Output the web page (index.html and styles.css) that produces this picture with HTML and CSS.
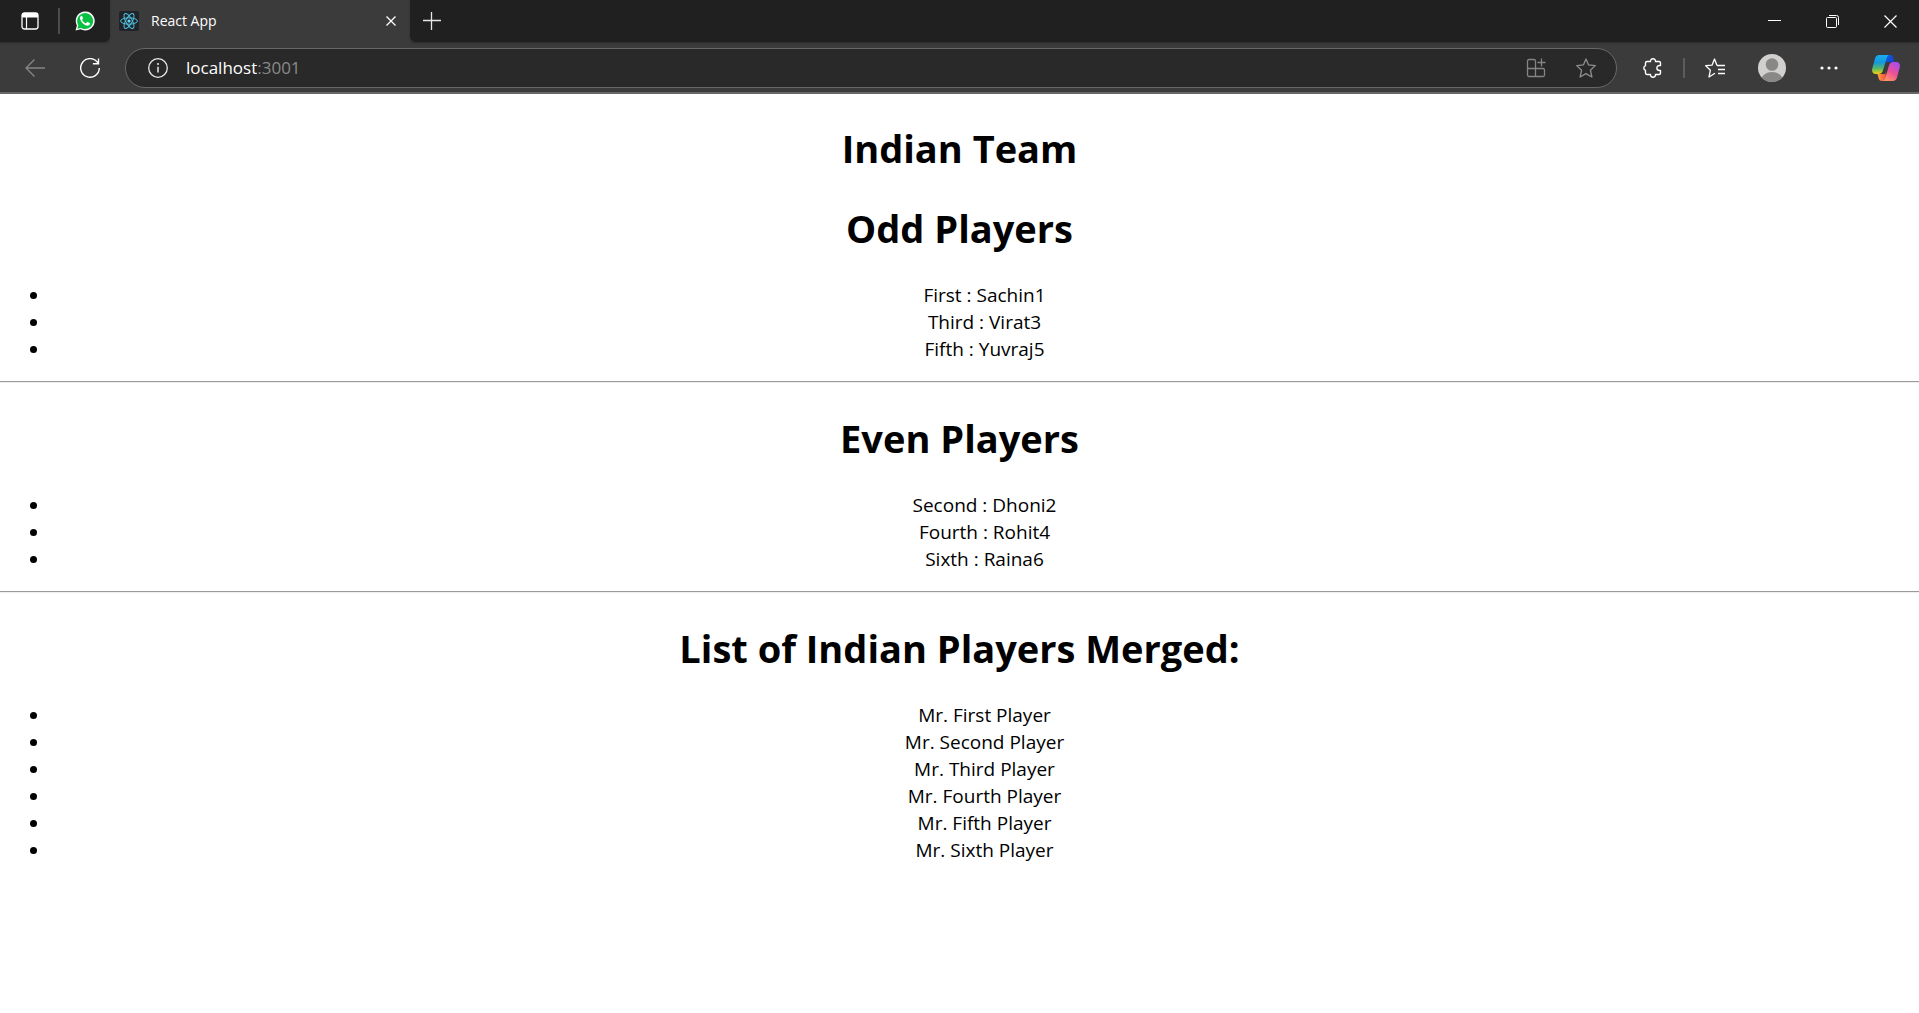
FILE: index.html
```html
<!DOCTYPE html>
<html lang="en">
<head>
<meta charset="utf-8">
<meta name="viewport" content="width=device-width, initial-scale=1">
<title>React App</title>
<link rel="stylesheet" href="styles.css">
</head>
<body>
<header class="browser">
  <div class="tabstrip">
    <div class="pinned">
      <button class="pin-btn" type="button" aria-label="Tab actions">
        <svg width="18" height="18" viewBox="0 0 18 18" fill="none" stroke="#fff"><rect x="1" y="1" width="16" height="16" rx="2.500" stroke-width="1.300"/><path d="M1.500 1.500h15v3.500h-15z" fill="#fff"/><path d="M5.500 5v12" stroke-width="1.200"/></svg>
      </button>
      <span class="pin-sep"></span>
      <button class="pin-btn" type="button" aria-label="WhatsApp">
        <svg width="20" height="20" viewBox="0 0 20 20"><path d="M.5 19.500l1.400-5A9.500 9.500 0 1 1 5.600 18.200z" fill="#fff"/><path d="M2.300 17.700l1-3.500A8 8 0 1 1 6 16.900z" fill="#0bc143"/><path d="M7.300 5.400c-.3-.6-.7-.6-1-.5C5.500 5 4.800 6.200 5 7.400c.4 2.700 3.600 6.200 6.600 7.100 1.700.5 3.100-.4 3.300-1.600.1-.6.1-.8-.2-1l-2-.9c-.4-.2-.6 0-.8.300l-.7.9c-.2.200-.4.200-.7.100-1.600-.7-2.700-1.800-3.400-3.200-.1-.3 0-.4.200-.6.500-.6.900-.9.700-1.400z" fill="#fff"/></svg>
      </button>
    </div>
    <div class="tab">
      <svg class="favicon" width="20" height="20" viewBox="0 0 20 20" fill="none" stroke="#4fc3de"><rect width="20" height="20" rx="2" fill="#20232a" stroke="none"/><ellipse cx="10" cy="10" rx="8.400" ry="3.200"/><ellipse cx="10" cy="10" rx="8.400" ry="3.200" transform="rotate(60 10 10)"/><ellipse cx="10" cy="10" rx="8.400" ry="3.200" transform="rotate(120 10 10)"/><circle cx="10" cy="10" r="1.600" fill="#61dafb" stroke="none"/></svg>
      <span class="tab-title">React App</span>
      <button class="tab-close" type="button" aria-label="Close tab">
        <svg width="10" height="10" viewBox="0 0 10 10" stroke="#fff" stroke-width="1.300"><path d="M.5.5l9 9M9.500.5l-9 9"/></svg>
      </button>
    </div>
    <div class="strip-rest">
      <button class="new-tab" type="button" aria-label="New tab">
        <svg width="18" height="18" viewBox="0 0 18 18" stroke="#e6e6e6" stroke-width="1.300"><path d="M0 8.500h18M8.500 0v18"/></svg>
      </button>
      <div class="window-controls">
        <button type="button" aria-label="Minimize"><svg width="13" height="13" viewBox="0 0 13 13" stroke="#fff"><path d="M0 5.500h13"/></svg></button>
        <button type="button" aria-label="Restore"><svg width="13" height="13" viewBox="0 0 13 13" fill="none" stroke="#fff"><rect x=".5" y="2.500" width="10" height="10" rx="1"/><path d="M3 .5h7.500a2 2 0 0 1 2 2V10"/></svg></button>
        <button type="button" aria-label="Close window"><svg width="13" height="13" viewBox="0 0 13 13" stroke="#fff" stroke-width="1.200"><path d="M.5.5l12 12M12.500.5l-12 12"/></svg></button>
      </div>
    </div>
  </div>
  <div class="toolbar">
    <button class="tool" type="button" aria-label="Back"><svg width="20" height="18" viewBox="0 0 20 18" fill="none" stroke="#858585" stroke-width="1.300"><path d="M20 9H1M9.500.5L1 9l8.500 8.500"/></svg></button>
    <button class="tool tool-reload" type="button" aria-label="Refresh"><svg width="20" height="20" viewBox="0 0 20 20" fill="none" stroke="#fff" stroke-width="1.400"><path d="M18 5.200A9.300 9.300 0 1 0 19.300 10M18.500.5v5.200h-5.600"/></svg></button>
    <form class="address">
      <button class="info" type="button" aria-label="View site information"><svg width="20" height="20" viewBox="0 0 20 20" fill="none" stroke="#e8e8e8" stroke-width="1.300"><circle cx="10" cy="10" r="9.300"/><path d="M10 8.800v5.700" stroke-width="1.500"/><circle cx="10" cy="6" r="1" fill="#e8e8e8" stroke="none"/></svg></button>
      <label class="url"><input class="url-host" type="text" value="localhost" aria-label="Address" size="9"><span class="url-port">:3001</span></label>
      <button class="tool" type="button" aria-label="App available"><svg width="20" height="20" viewBox="0 0 20 20" fill="none" stroke="#858585" stroke-width="1.300"><path d="M9.500 18.500V3a1.500 1.500 0 0 0-1.500-1.500H3A1.500 1.500 0 0 0 1.500 3v14A1.500 1.500 0 0 0 3 18.500h14a1.500 1.500 0 0 0 1.500-1.500v-5a1.500 1.500 0 0 0-1.500-1.500H1.500M15.500.5v8M11.500 4.500h8"/></svg></button>
      <button class="tool" type="button" aria-label="Add to favorites"><svg width="20" height="20" viewBox="0 0 20 20" fill="none" stroke="#8e8e8e" stroke-width="1.300" stroke-linejoin="round"><path d="M10 1l2.600 5.900 6.700.7-4.900 4.600 1.500 6.800L10 15.600 4.100 19l1.500-6.800L.7 7.600l6.700-.7z"/></svg></button>
    </form>
    <button class="tool" type="button" aria-label="Extensions"><svg width="20" height="20" viewBox="0 0 20 20" fill="none" stroke="#fff" stroke-width="1.400" stroke-linejoin="round"><path d="M4 3.500h3.500C7.300 1.700 8.500.8 10 .8s2.700.9 2.500 2.700H16c.8 0 1.500.7 1.500 1.500v2.500h-1c-1.700 0-2.600 1.100-2.600 2.500s.9 2.500 2.600 2.500h1V15c0 .8-.7 1.500-1.500 1.500h-3.500c.2 1.800-1 2.700-2.500 2.700s-2.700-.9-2.500-2.700H4c-.8 0-1.500-.7-1.500-1.500v-2.600C1.300 12 .8 11.200.8 10s.5-2 1.700-2.400V5c0-.8.7-1.500 1.500-1.500z"/></svg></button>
    <span class="tool-sep"></span>
    <button class="tool" type="button" aria-label="Favorites"><svg width="20" height="20" viewBox="0 0 20 20" fill="none" stroke="#fff" stroke-width="1.300" stroke-linejoin="round"><path d="M12 7.500L9.500 1 7 7.200l-6.300.5 4.700 4.500L4 19l6-3.700M12 7.500h8M13 11.500h7M13 15.500h7"/></svg></button>
    <button class="tool" type="button" aria-label="Profile"><svg width="28" height="28" viewBox="0 0 28 28"><defs><clipPath id="face"><circle cx="14" cy="14" r="14"/></clipPath></defs><g clip-path="url(#face)"><rect width="28" height="28" fill="#d2d0ce"/><circle cx="14" cy="10.500" r="6.300" fill="#8a8886"/><ellipse cx="14" cy="25.500" rx="10.500" ry="7.500" fill="#8a8886"/></g></svg></button>
    <button class="tool" type="button" aria-label="Settings and more"><svg width="18" height="4" viewBox="0 0 18 4" fill="#fff"><circle cx="2" cy="2" r="1.600"/><circle cx="9" cy="2" r="1.600"/><circle cx="16" cy="2" r="1.600"/></svg></button>
    <button class="tool" type="button" aria-label="Copilot"><svg width="28" height="26" viewBox="0 0 28 26">
      <defs>
        <linearGradient id="cool" x1="0" y1="0" x2="0" y2="1"><stop offset="0" stop-color="#16aef0"/><stop offset=".4" stop-color="#1598dc"/><stop offset=".7" stop-color="#54b86a"/><stop offset="1" stop-color="#f4d20a"/></linearGradient>
        <linearGradient id="warm" x1=".8" y1="0" x2=".2" y2="1"><stop offset="0" stop-color="#a54df0"/><stop offset=".5" stop-color="#ec4f98"/><stop offset="1" stop-color="#ff9a62"/></linearGradient>
        <linearGradient id="deep" x1="0" y1="0" x2="1" y2="1"><stop offset="0" stop-color="#0b62e8"/><stop offset="1" stop-color="#1833ba"/></linearGradient>
        <linearGradient id="ember" x1="0" y1="0" x2="1" y2="0"><stop offset="0" stop-color="#ffa43a"/><stop offset="1" stop-color="#ef4b46"/></linearGradient>
      </defs>
      <path d="M14 0h4c2 0 3 1 3.500 2.800L22.700 7H19c-3 0-4 2-4.700 4.200z" fill="url(#deep)"/>
      <path d="M14 26h-4c-2 0-3-1-3.500-3L5.500 19H9c3 0 4-2 4.700-4.500z" fill="url(#ember)"/>
      <path d="M7 0h10.500c-1.400.2-2.200 1.200-2.700 2.800L11 15.500c-.7 2.300-2 3.500-4.500 3.500H3.800c-3 0-4.300-2.200-3.500-5.500L3 3.500C3.700 1.200 5 0 7 0z" fill="url(#cool)"/>
      <path d="M21 26H10.500c1.400-.2 2.200-1.200 2.700-2.800L17 10.500C17.700 8.200 19 7 21.500 7h2.700c3 0 4.300 2.200 3.500 5.500L25 22.500c-.7 2.300-2 3.500-4 3.500z" fill="url(#warm)"/>
      <path d="M14.800 7h3.700c-1.500.5-2.300 1.800-2.900 3.800L13.200 19H9c1.200-.6 1.700-1.800 2.200-3.500z" fill="#3b3b3b"/>
    </svg></button>
  </div>
</header>
<main class="page">
  <h1>Indian Team</h1>
  <h1>Odd Players</h1>
  <ul>
    <li>First : Sachin1</li>
    <li>Third : Virat3</li>
    <li>Fifth : Yuvraj5</li>
  </ul>
  <hr>
  <h1>Even Players</h1>
  <ul>
    <li>Second : Dhoni2</li>
    <li>Fourth : Rohit4</li>
    <li>Sixth : Raina6</li>
  </ul>
  <hr>
  <h1>List of Indian Players Merged:</h1>
  <ul>
    <li>Mr. First Player</li>
    <li>Mr. Second Player</li>
    <li>Mr. Third Player</li>
    <li>Mr. Fourth Player</li>
    <li>Mr. Fifth Player</li>
    <li>Mr. Sixth Player</li>
  </ul>
</main>
</body>
</html>
```
FILE: styles.css
```css
* { box-sizing: border-box; }

body {
  margin: 0;
  background: #fff;
  color: #000;
  font-family: "Segoe UI", "Open Sans", "Noto Sans", sans-serif;
}

button {
  display: flex;
  align-items: center;
  justify-content: center;
  flex: none;
  margin: 0;
  padding: 0;
  border: 0;
  background: none;
}

/* Browser chrome */
.browser {
  background: #3b3b3b;
  border-bottom: 2px solid #686868;
}

.tabstrip {
  display: flex;
  height: 42px;
}

.pinned {
  display: flex;
  align-items: center;
  width: 110px;
  padding-left: 5px;
  background: #202020;
  border-bottom-right-radius: 6px;
  box-shadow: 0 1px 2px #2a2a2a;
}

.pin-btn {
  width: 50px;
  height: 42px;
}

.pin-sep {
  flex: none;
  width: 2px;
  height: 26px;
  margin-left: 3px;
  background: #4c4c4c;
}

.tab {
  display: flex;
  align-items: center;
  width: 300px;
  padding: 0 8px 0 9px;
}

.tab-title {
  flex: 1;
  margin-left: 12px;
  color: #fff;
  font-size: 14px;
  line-height: 20px;
}

.tab-close {
  width: 22px;
  height: 22px;
}

.strip-rest {
  display: flex;
  flex: 1;
  justify-content: space-between;
  background: #202020;
  border-bottom-left-radius: 6px;
  box-shadow: 0 1px 2px #2a2a2a;
}

.new-tab { width: 44px; }

.window-controls { display: flex; }

.window-controls button { width: 58px; }

.toolbar {
  display: flex;
  align-items: center;
  height: 50px;
  padding: 2px 9px 0 11px;
}

.tool {
  width: 48px;
  height: 40px;
}

.tool + .tool { margin-left: 9px; }
.tool.tool-reload { margin-left: 7px; }

.address {
  display: flex;
  flex: 1;
  align-items: center;
  height: 40px;
  margin: 0 12px 0 11px;
  padding: 0 6px 0 22px;
  border: 1px solid #686868;
  border-radius: 20px;
  background: #292929;
}

.address .tool { height: 36px; }
.address .tool + .tool { margin-left: 2px; }

.info {
  width: 20px;
  height: 20px;
}

.url {
  display: flex;
  flex: 1;
  align-items: center;
  margin-left: 18px;
  font-size: 17px;
  line-height: 24px;
}

.url-host {
  field-sizing: content;
  padding: 0;
  border: 0;
  outline: 0;
  background: none;
  color: #fff;
  font: inherit;
}

.url-port { color: #8a8a8a; }

.tool-sep {
  width: 2px;
  height: 20px;
  margin: 0 6px;
  background: #5c5c5c;
}

/* Page content */
.page {
  padding-top: 28px;
  font-size: 19px;
  line-height: 27px;
  text-align: center;
}

.page h1 {
  margin: 0 0 27px;
  font-size: 38px;
  font-weight: 700;
  line-height: 53px;
}

.page ul {
  margin: 0 0 18px;
  padding-left: 50px;
}

.page hr {
  margin: 0 0 29px;
  border: 0;
  border-top: 1px solid #9a9a9a;
  border-bottom: 1px solid #eee;
}
```
